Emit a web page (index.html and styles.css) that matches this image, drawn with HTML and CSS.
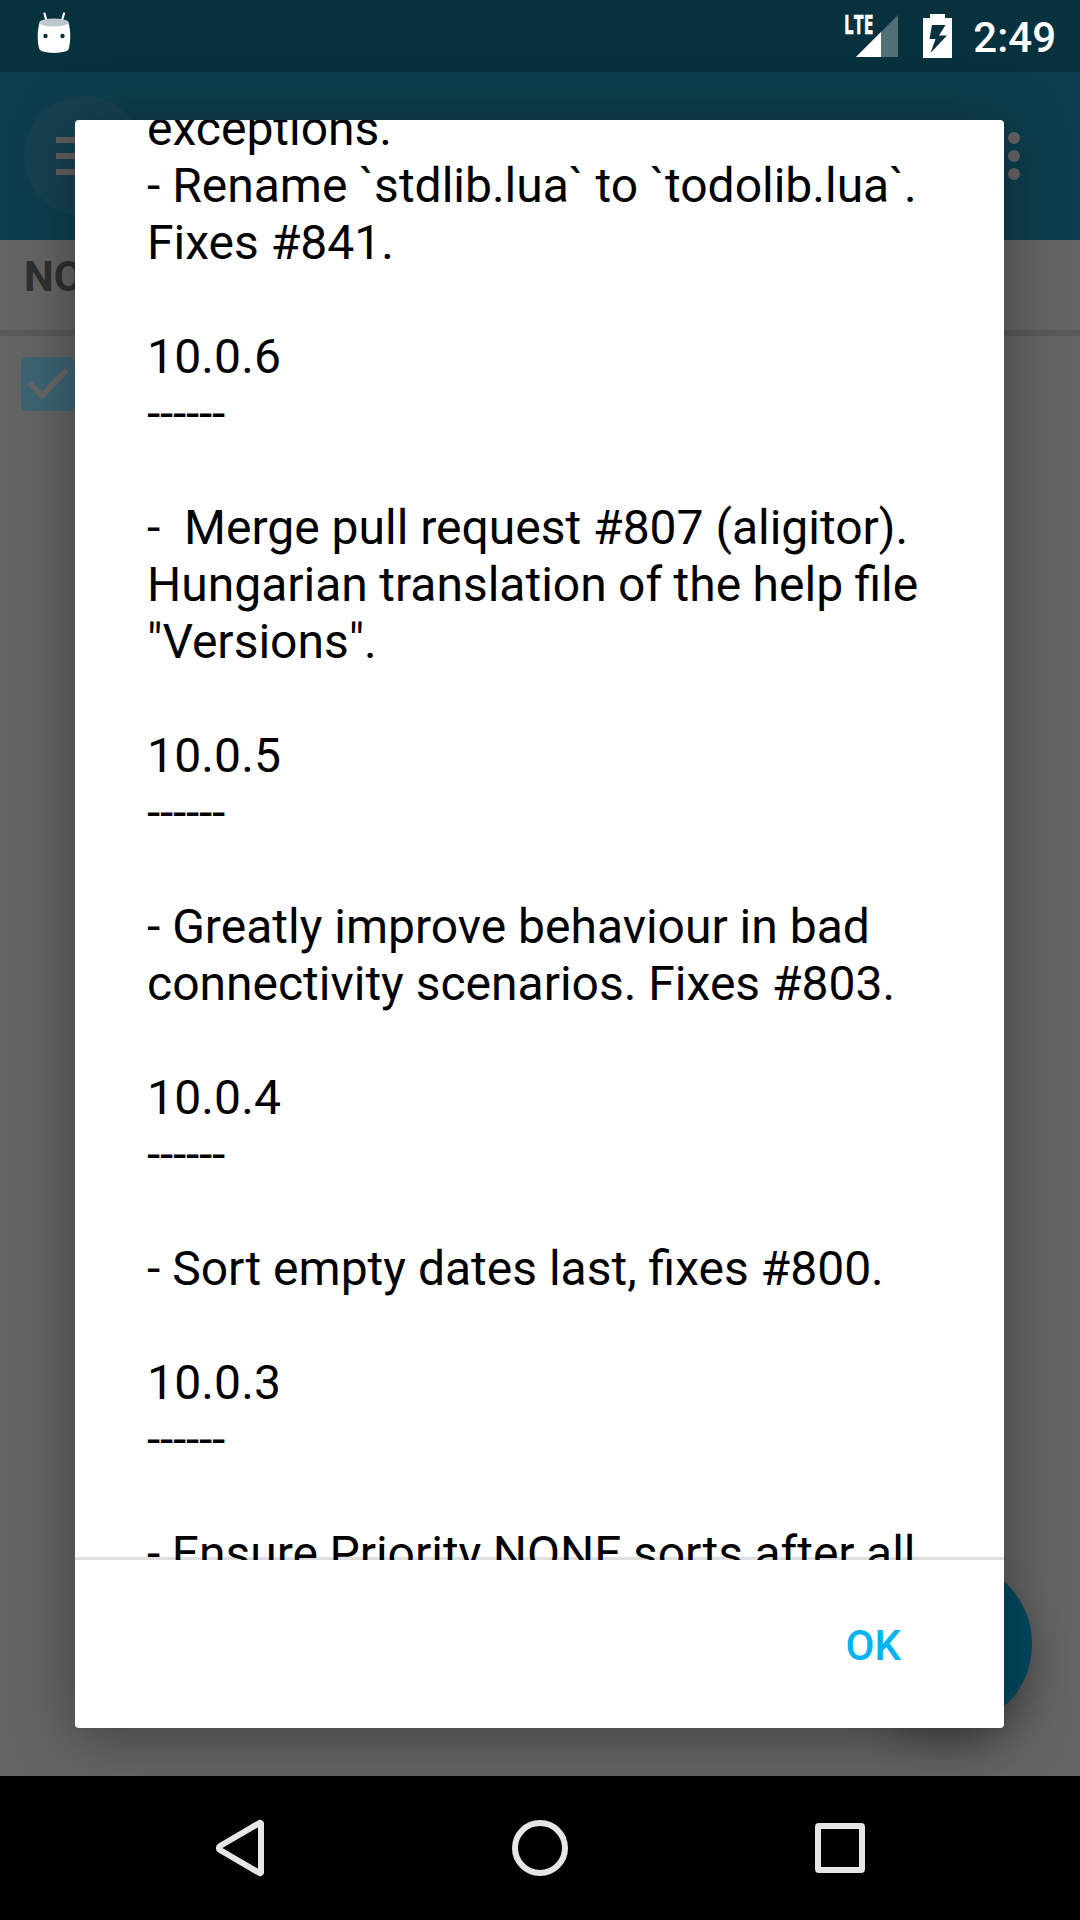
FILE: index.html
```html
<!DOCTYPE html>
<html lang="en">
<head>
<meta charset="utf-8">
<title>Changelog</title>
<link rel="stylesheet" href="styles.css">
</head>
<body>
<div class="screen">
  <header class="status-bar">
    <svg class="robot" width="34" height="42" viewBox="0 0 34 42">
      <path d="M7.500 1.500L9.500 9M27 1.500L24.800 9" stroke="#fff" stroke-width="2.200" stroke-linecap="round"/>
      <path d="M2.500 11C.5 17 0 28 2 36c.5 2 1.500 3 4 3.600 6 1.800 16 1.800 22 0 2.500-.6 3.500-1.600 4-3.600 2-8 1.500-19-.5-25z" fill="#fff"/>
      <ellipse cx="17" cy="10.500" rx="14.800" ry="4" fill="#bcc8cc"/>
      <circle cx="8.500" cy="24" r="2.200" fill="#07313d"/>
      <circle cx="25.500" cy="24" r="2.200" fill="#07313d"/>
    </svg>
    <div class="status-right">
      <div class="signal">
        <svg width="54" height="44" viewBox="0 0 54 44">
          <path d="M53 1v42H11z" fill="#fff" fill-opacity=".3"/>
          <path d="M36 18v25H11z" fill="#fff"/>
        </svg>
        <span class="lte">LTE</span>
      </div>
      <svg class="battery" width="29" height="44" viewBox="0 0 29 44">
        <path fill-rule="evenodd" fill="#fff" d="M7 0h15v4h7v40H0V4h7zM9 11L6.500 25H12.500L7.500 39 24 21.500H16L22.500 11z"/>
      </svg>
      <span class="clock">2:49</span>
    </div>
  </header>
  <div class="toolbar">
    <div class="menu-button">
      <svg width="54" height="38" viewBox="0 0 54 38"><path d="M0 0h54v6H0zM0 16h54v6H0zM0 32h54v6H0z" fill="#5f5f5f"/></svg>
    </div>
    <svg width="12" height="48" viewBox="0 0 12 48" fill="#646464"><circle cx="6" cy="6" r="6"/><circle cx="6" cy="24" r="6"/><circle cx="6" cy="42" r="6"/></svg>
  </div>
  <main class="list">
    <h2 class="group">NO</h2>
    <div class="task">
      <svg width="54" height="54" viewBox="0 0 54 54"><rect width="54" height="54" rx="6" fill="#3b6472"/><path d="M8 25.500L21 38.500 45.500 13" fill="none" stroke="#666" stroke-width="5.600"/></svg>
    </div>
    <div class="fab"></div>
  </main>
  <nav class="nav-bar">
    <svg width="56" height="60" viewBox="0 0 56 60"><path d="M49 5.500v49a1 1 0 0 1-1.500.5L8 32a2.300 2.300 0 0 1 0-4L47.500 5a1 1 0 0 1 1.500.5z" fill="none" stroke="#e6e6e6" stroke-width="6"/></svg>
    <svg width="56" height="60" viewBox="0 0 56 60"><circle cx="28" cy="30" r="25" fill="none" stroke="#e6e6e6" stroke-width="6"/></svg>
    <svg width="56" height="60" viewBox="0 0 56 60"><rect x="6" y="8" width="44" height="44" rx="1" fill="none" stroke="#e6e6e6" stroke-width="6"/></svg>
  </nav>
  <div class="dialog">
    <div class="scroller">
      <div class="notes">exceptions.
- Rename `stdlib.lua` to `todolib.lua`.
Fixes #841.

<span class="version">10.0.6</span>
<span class="rule">------</span>

-  Merge pull request #807 (aligitor).
<span class="snug">Hungarian translation of the help file</span>
"Versions".

<span class="version">10.0.5</span>
<span class="rule">------</span>

- Greatly improve behaviour in bad
connectivity scenarios. Fixes #803.

<span class="version">10.0.4</span>
<span class="rule">------</span>

- Sort empty dates last, fixes #800.

<span class="version">10.0.3</span>
<span class="rule">------</span>

<span class="snug">- Ensure Priority NONE sorts after all</span></div>
    </div>
    <div class="actions"><button class="ok">OK</button></div>
  </div>
</div>
</body>
</html>
```
FILE: styles.css
```css
* { box-sizing: border-box; }
body { margin: 0; font-family: Roboto, sans-serif; background: #000; }
svg { display: block; flex: none; }

.screen {
  position: relative;
  width: 1080px;
  height: 1920px;
  overflow: hidden;
  display: grid;
  grid-template-rows: 72px 168px 1536px 144px;
}

.status-bar {
  display: flex;
  justify-content: space-between;
  align-items: flex-start;
  padding: 12px 24px 0 37px;
  background: #07313d;
  color: #fff;
}
.status-right { display: flex; align-items: flex-start; padding-top: 2px; }
.signal { position: relative; margin-right: 24px; }
.lte {
  position: absolute;
  left: -1px;
  top: -3px;
  font: 700 26px/26px "Open Sans", sans-serif;
  -webkit-text-stroke: .6px #fff;
  transform: scaleX(.66);
  transform-origin: 0 0;
}
.clock { margin-left: 21px; font-size: 42px; font-weight: 500; line-height: 48px; }

.toolbar {
  display: flex;
  justify-content: space-between;
  align-items: center;
  padding: 0 60px 0 24px;
  background: #0d3e4e;
}
.menu-button {
  display: flex;
  align-items: center;
  width: 120px;
  height: 120px;
  padding-left: 32px;
  border-radius: 50%;
  background: #164151;
}

.list { position: relative; background: #646464; }
.group {
  margin: 0;
  height: 96px;
  padding: 13px 0 0 24px;
  border-bottom: 6px solid #595959;
  font-size: 42px;
  font-weight: 700;
  line-height: 48px;
  color: #2f2f2f;
}
.task { padding: 21px; }
.fab {
  position: absolute;
  right: 48px;
  bottom: 48px;
  width: 168px;
  height: 168px;
  border-radius: 50%;
  background: #00485f;
  box-shadow: 0 18px 36px rgba(0, 0, 0, .25);
}

.nav-bar {
  display: flex;
  justify-content: space-between;
  align-items: center;
  padding: 0 212px;
  background: #000;
  z-index: 2;
}

.dialog {
  position: absolute;
  left: 75px;
  top: 120px;
  width: 929px;
  height: 1608px;
  display: flex;
  flex-direction: column;
  border-radius: 4px;
  background: #fff;
  box-shadow: 0 8px 60px rgba(0, 0, 0, .36);
}
.scroller {
  height: 1440px;
  padding: 0 72px;
  overflow: hidden;
  background: linear-gradient(#dfdfdf, #dfdfdf) bottom / 100% 3px no-repeat;
}
.notes { margin-top: -20px; font-size: 48px; line-height: 57px; white-space: pre; color: #000; }
.version { letter-spacing: .15px; }
.rule { letter-spacing: -.25px; }
.snug { word-spacing: -.5px; }
.actions { flex: 1; display: flex; justify-content: flex-end; align-items: center; padding: 3px 103px 0 0; }
.ok { border: 0; padding: 0; background: none; font: 500 42px/48px Roboto, sans-serif; color: #00b4f1; }
```
